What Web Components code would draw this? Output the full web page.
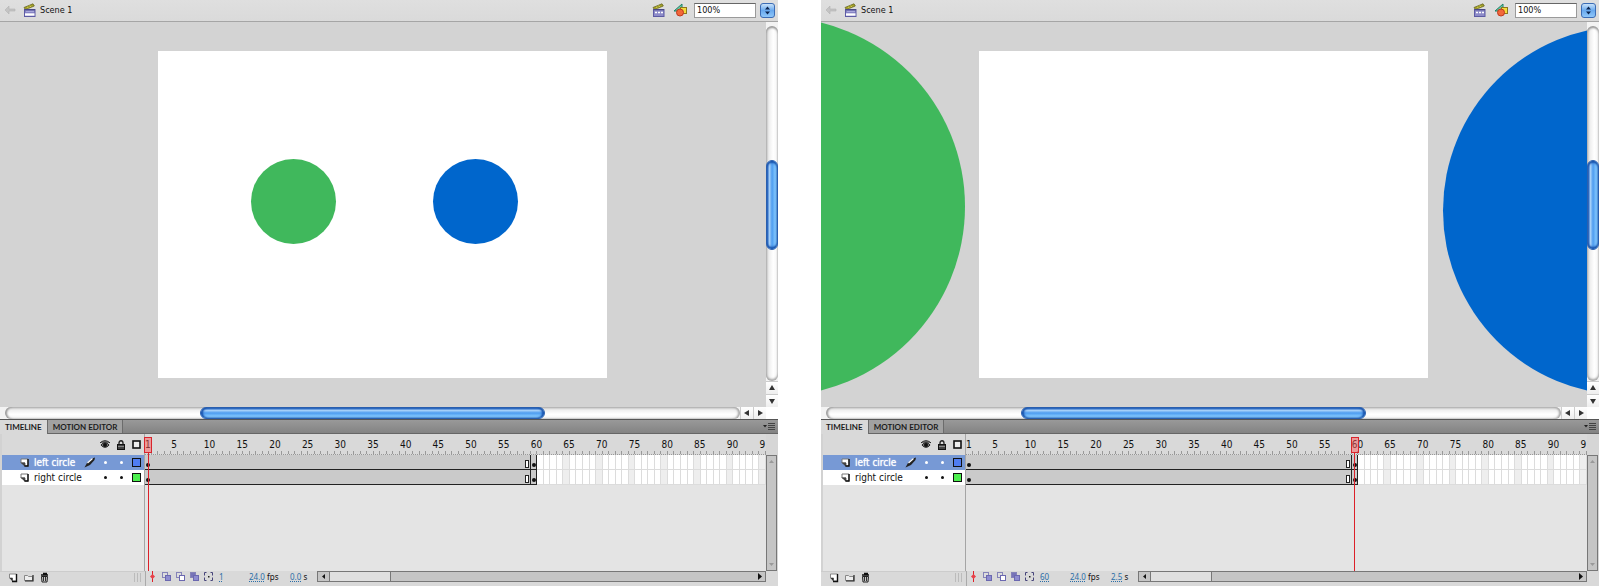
<!DOCTYPE html>
<html lang="en">
<head>
<meta charset="utf-8">
<title>Scene 1</title>
<style>
html,body{margin:0;height:100%;background:#fff}
body{font:10px/12px "DejaVu Sans Condensed","DejaVu Sans",sans-serif;color:#111}
main{display:grid;grid-template-columns:1fr 1fr;gap:43px;height:100vh;min-height:400px}
</style>
</head>
<body>
<main>
  <anim-document frame="1" seconds="0.0" label="Start frame">
    <circle-shape cx="136" cy="151" r="43" fill="#40b85c"></circle-shape>
    <circle-shape cx="318" cy="151" r="43" fill="#0066cc"></circle-shape>
  </anim-document>
  <anim-document frame="60" seconds="2.5" label="End frame">
    <circle-shape cx="-203" cy="156" r="190" fill="#40b85c"></circle-shape>
    <circle-shape cx="649" cy="160" r="185" fill="#0066cc"></circle-shape>
  </anim-document>
</main>
<script>
const reset = `:host,*{box-sizing:border-box}button,input{margin:0;padding:0;border:0;background:none;font:inherit;color:inherit;border-radius:0;display:block}svg{display:block}`;
const define = (name, render) => customElements.define(name, class extends HTMLElement {
  connectedCallback() {
    if (this.shadowRoot) return;
    const root = this.attachShadow({mode: 'open'});
    const t = document.createElement('template');
    t.innerHTML = render(this);
    root.append(t.content.cloneNode(true));
  }
});

const clap = (open) => `<svg width="13" height="14" viewBox="0 0 13 14" aria-hidden="true">
<path d="M1 4.500 10 .8l1.300 2.200L2.500 6.600Z" fill="#a6a22a" stroke="#66661f" stroke-width=".8"/>
<path d="m4 3.800 1.500 1.400M6.500 2.600 8 4.100" stroke="#e0dc60" stroke-width=".8"/>
<rect x="1.500" y="6.500" width="10.500" height="7" fill="${open ? '#8583c4' : '#8d8bc8'}" stroke="#5d5ba4"/>
<path d="M1.500 6.700h10.500" stroke="#494782" stroke-width="1.200"/>
${open ? '<path d="M2 11.500h9.500" stroke="#fff" stroke-width="2.400"/><path d="M3 8.500h8" stroke="#a9a8dc"/>' : '<path d="M3 9.500h8" stroke="#fff" stroke-width="1.500" stroke-dasharray="2 1"/>'}</svg>`;

define('scene-bar', () => `<style>${reset}
:host{display:flex;align-items:center;height:22px;padding:0 3px 1px 4px;border-bottom:1px solid #a5a5a5;background:linear-gradient(#dfdfdf,#dadada);font-size:9px}
.back{margin-right:7px}.name{margin-left:4px;flex:1}
.shapes{margin:0 7px 0 8px}
input{width:62px;height:15px;margin-right:4px;padding:0 2px;background:#fff;border:1px solid #9a9a9a;border-top-color:#666;font-size:9px}
.step{width:15px;height:15px;border-radius:3px;border:1px solid #3b6cb5;background:linear-gradient(#c9e2fa,#69a9ee 50%,#8fc7fa)}
.step svg{margin:auto}
</style>
<button class="back" aria-label="Back"><svg width="12" height="12" viewBox="0 0 12 12"><path d="M1 6 5 2v3h6v2H5v3Z" fill="#c4c4c4" stroke="#b4b4b4" stroke-width=".6"/></svg></button>
${clap(true)}<span class="name">Scene 1</span>
<button aria-label="Edit scene">${clap(false)}</button>
<button class="shapes" aria-label="Edit symbols"><svg width="14" height="14" viewBox="0 0 14 14"><path d="M1 8 9 1v7Z" fill="#6cc9a4" stroke="#1e8068"/><rect x="7.500" y="4.500" width="6" height="6" fill="#f3dd3c" stroke="#8c7820"/><circle cx="7" cy="9.500" r="3.500" fill="#f2683a" stroke="#c0381f"/></svg></button>
<input type="text" value="100%" aria-label="Zoom"><button class="step" aria-label="Zoom presets"><svg width="7" height="9" viewBox="0 0 7 9"><path d="M3.500 .5 6 3.500H1ZM3.500 8.500 1 5.500h5Z" fill="#0b2450"/></svg></button>`);

define('aqua-scroll', (el) => {
  const v = el.hasAttribute('vertical');
  const arrow = (d, l) => `<button aria-label="${l}"><svg width="8" height="8" viewBox="0 0 8 8"><path d="${d}" fill="#333"/></svg></button>`;
  return `<style>${reset}
:host{display:flex;flex-direction:${v ? 'column' : 'row'};${v ? 'width' : 'height'}:12px;background:#f3f3f3;overflow:hidden}
.track{flex:1;display:flex;flex-direction:inherit;border-radius:6px;margin:${v ? '4px 0 0' : '0 0 0 5px'};
 background:linear-gradient(to ${v ? 'right' : 'bottom'},#c4c4c4,#eee 25%,#fff 60%,#f4f4f4);box-shadow:inset ${v ? '0 2px 2px #999,inset 0 -2px 2px #aaa' : '2px 0 2px #999,inset -2px 0 2px #aaa'}}
.a{flex:${el.getAttribute('before')}}.b{flex:${el.getAttribute('after')}}
.thumb{flex:${el.getAttribute('size')};border-radius:6px;border:1px solid #2a5fae;
 background:linear-gradient(to ${v ? 'right' : 'bottom'},#2c6cc8,#a4cff8 25%,#4d9cf0 50%,#74bcfb 75%,#95d6ff);box-shadow:inset ${v ? '0 2px 2px #1550ab,inset 0 -2px 2px #1550ab' : '2px 0 2px #1550ab,inset -2px 0 2px #1550ab'}}
button{width:${v ? 12 : 13}px;height:${v ? 13 : 12}px;display:grid;place-items:center;background:linear-gradient(#fff,#eee);border:0 solid #ccc;border-${v ? 'top' : 'left'}-width:1px}
</style><div class="track"><div class="a"></div><div class="thumb"></div><div class="b"></div></div>
${v ? arrow('M4 1 7 6H1Z', 'Scroll up') + arrow('M4 7 1 2h6Z', 'Scroll down') : arrow('M1 4 6 1v6Z', 'Scroll left') + arrow('M7 4 2 1v6Z', 'Scroll right')}`;
});

define('circle-shape', (el) => {
  const n = (k) => Number(el.getAttribute(k)), r = n('r');
  return `<style>:host{position:absolute;left:${n('cx') - r}px;top:${n('cy') - r}px;width:${2 * r - 1}px;height:${2 * r - 1}px;border-radius:50%;background:${el.getAttribute('fill')}}</style>`;
});

define('stage-view', () => `<style>
:host{display:flex;align-items:center;justify-content:center;padding-right:1px;background:#d3d3d3;overflow:hidden;min-width:0;min-height:0}
.artboard{position:relative;width:449px;height:327px;flex:none;background:#fff}
</style><div class="artboard"><slot></slot></div>`);

define('panel-tabs', () => `<style>${reset}
:host{display:flex;height:15px;border-top:1px solid #555;background:linear-gradient(#999,#838383);border-bottom:1px solid #666;font:700 8px/14px Lato,"Noto Sans",sans-serif}
button{padding:0 5px;background:#a1a1a1;border-right:1px solid #6c6c6c;color:#1c1c1c;white-space:nowrap}
.on{background:#d9d9d9;height:14px}
.menu{margin-left:auto;background:none;border:0;padding:0 3px 0 0}
</style><div role="tablist" style="display:contents"><button role="tab" aria-selected="true" class="on">TIMELINE</button><button role="tab" aria-selected="false">MOTION EDITOR</button></div>
<button class="menu" aria-label="Panel menu"><svg width="12" height="9" viewBox="0 0 12 9"><path d="M0 3h4L2 5.500Z" fill="#222"/><path d="M5 1.500h7M5 3.500h7M5 5.500h7M5 7.500h7" stroke="#444"/></svg></button>`);

define('layer-row', (el) => `<style>${reset}
:host{display:grid;grid-template-columns:32px 46px 1fr 16px 16px 12px;align-items:center;height:15px;background:#fff;color:#111;padding-right:3px}
:host([active]){background:#7799d5;color:#fff;text-shadow:0 0 1px #fff}
.page{justify-self:end;margin-right:5px}.name{white-space:nowrap}
.dot{justify-self:center;width:3px;height:3px;border-radius:50%;background:currentColor}
.box{width:9px;height:9px;border:1px solid #111;background:${el.getAttribute('color')};justify-self:end}
.pen{margin-left:4px}
</style>
<svg class="page" width="9" height="9" viewBox="0 0 9 9"><path d="M1 1h7v7H5V5H1Z" fill="#fff" stroke="#777"/><path d="M.5 4.500 5 8.800V4.500Z" fill="#444"/><path d="M8 1v7H4.500" fill="none" stroke="#111" stroke-width="1.400"/></svg>
<span class="name"><slot></slot></span>
<span class="pen">${el.hasAttribute('active') ? '<svg width="12" height="11" viewBox="0 0 12 11"><path d="M.5 10.500 3 6 8 1.500 11 .5 10.500 3 6 8Z" fill="#222"/><path d="M3.500 6 8.500 1.500" stroke="#fff" stroke-width="1.200"/></svg>' : ''}</span>
<span class="dot"></span><span class="dot"></span><button class="box" aria-label="Show as outlines"></button>`);

const LAST = 95;
define('frame-ruler', () => {
  let labels = '', ticks = '';
  for (let i = 1; i <= LAST; i++) {
    ticks += `<i style="grid-column:${i}"></i>`;
    if (i === 1 || i % 5 === 0) labels += `<span style="grid-column:${i}">${i === LAST ? '9' : i}</span>`;
  }
  return `<style>:host{display:grid;grid-template-columns:repeat(${LAST},minmax(0,1fr));grid-template-rows:17px 4px;height:21px;background:#d9d9d9;border-bottom:1px dotted #999;box-sizing:border-box;font-size:10px;line-height:21px}
span{grid-row:1;white-space:nowrap}i{grid-row:2;border-right:1px solid #999;height:3px}</style>${labels}${ticks}`;
});

define('frame-row', () => {
  let cells = '';
  for (let i = 61; i <= LAST; i++) cells += `<i class="${i % 5 ? '' : 'five'}"></i>`;
  return `<style>*{box-sizing:border-box}
:host{display:grid;grid-template-columns:repeat(${LAST},minmax(0,1fr));height:15px}
.tween,.key{background:#cacaca;border-bottom:1px solid #222;border-right:1px solid #222;display:flex;align-items:flex-end}
.tween{grid-column:1/60;justify-content:space-between;padding:0 1px 1px 1px}
.key{padding:0 0 2px 1px}
.dot{width:4px;height:4px;border-radius:50%;background:#111}.tween .dot{margin-bottom:1px}
.end{width:4px;height:8px;border:1px solid #222;background:#fff}
i{background:#fff;border-right:1px solid #dcdcdc;border-bottom:1px solid #dcdcdc}.five{background:#eee}
</style><div class="tween"><span class="dot"></span><span class="end"></span></div><div class="key"><span class="dot"></span></div>${cells}`;
});

define('play-head', (el) => `<style>*{box-sizing:border-box}
:host{position:absolute;inset:0;z-index:1;display:grid;grid-template-columns:repeat(${LAST},minmax(0,1fr));pointer-events:none}
div{grid-column:${el.getAttribute('frame')};display:flex;flex-direction:column;align-items:center;padding-top:3px}
b{flex:none;width:8px;height:16px;border:1px solid #d8242c;background:rgba(255,90,90,.5)}
i{flex:1;border-left:1px solid #dc2029}
</style><div><b></b><i></i></div>`);

define('panel-scroll', (el) => {
  const v = el.hasAttribute('vertical');
  const a = (d, l) => `<button aria-label="${l}"><svg width="7" height="7" viewBox="0 0 7 7"><path d="${d}" fill="${v ? '#999' : '#111'}"/></svg></button>`;
  return `<style>${reset}:host{display:flex;flex-direction:${v ? 'column' : 'row'};${v ? 'width:11px' : 'height:11px'};border:1px solid #777;background:#c5c5c5}
button{${v ? 'height' : 'width'}:11px;display:grid;place-items:center}
.thumb{width:62px;background:#dfdfdf;border:0 solid #777;border-width:0 1px}.gap{flex:1}</style>
${v ? a('M3.500 2 6 5H1Z', 'Scroll up') : a('M2 3.500 5 1v5Z', 'Scroll left') + '<div class="thumb"></div>'}<div class="gap"></div>${v ? a('M3.500 5 1 2h5Z', 'Scroll down') : a('M6 3.500 2 0v7Z', 'Scroll right')}`;
});

const onion = (a, b) => `<svg width="9" height="9" viewBox="0 0 9 9"><rect x=".5" y=".5" width="5" height="5" fill="${a}" stroke="#8583b8"/><rect x="3.500" y="3.500" width="5" height="5" fill="${b}" stroke="#6b68b0"/></svg>`;
define('timeline-status', (el) => `<style>${reset}
:host{display:grid;grid-template-columns:145px minmax(0,1fr) 12px;height:15px;background:#d9d9d9;font:8px/11px "Noto Sans",sans-serif}
.left{display:flex;align-items:flex-start;gap:6px;padding:0 4px 0 8px;border-top:1px solid #ccc}.grip{margin-left:auto}
.right{display:flex;align-items:flex-start;border-left:1px solid #aaa}
.tools{display:flex;align-items:center;gap:5px;padding-left:4px;width:73px}
.onion{margin-left:2px}
a{color:#2a6ea8;text-decoration:underline dotted;text-underline-offset:1px}
.v{white-space:nowrap}.f{width:30px}.r{width:41px}.s{width:27px}
panel-scroll{flex:1}
</style>
<div class="left">
<button aria-label="New layer"><svg width="10" height="11" viewBox="0 0 10 11"><path d="M1.500 2h7v7h-4V6h-3Z" fill="#fff" stroke="#888"/><path d="M1.500 6 4.500 9.500V6Z" fill="#333"/><path d="M8.500 2v7.500H4" fill="none" stroke="#111" stroke-width="1.400"/></svg></button>
<button aria-label="New folder"><svg width="10" height="11" viewBox="0 0 10 11"><path d="M.5 3.500h3l1 1h4v4h-8Z" fill="#eee" stroke="#888"/><path d="M9 3v6H1" fill="none" stroke="#222" stroke-width="1.200"/></svg></button>
<button aria-label="Delete"><svg width="9" height="11" viewBox="0 0 9 11"><path d="M1 3h7M3 1.500h4" stroke="#111" stroke-width="1.300"/><path d="M1.500 4.500h6l-.5 5.500H2Z" fill="#ccc" stroke="#222"/><path d="M3.500 5v4M5.500 5v4" stroke="#333"/></svg></button>
<svg class="grip" width="7" height="11" viewBox="0 0 7 11"><path d="M.5 1v9M3.500 1v9M6.500 1v9" stroke="#bbb"/></svg></div>
<div class="right"><div class="tools">
<button aria-label="Center frame"><svg width="5" height="11" viewBox="0 0 5 11"><path d="M2.500 0v11" stroke="#e02028"/><path d="M2.500 3 5 5.500 2.500 8 0 5.500Z" fill="#e84048"/></svg></button>
<button class="onion" aria-label="Onion skin">${onion('#ddd', '#8e8cd0')}</button><button aria-label="Onion skin outlines">${onion('#ddd', '#fff')}</button><button aria-label="Edit multiple frames">${onion('#7774b8', '#8e8cd0')}</button>
<button aria-label="Modify markers"><svg width="9" height="9" viewBox="0 0 9 9"><path d="M2.500 .5H.5v3M.5 5.500v3h2M6.500 .5h2v3M8.500 5.500v3h-2" fill="none" stroke="#46447a"/><rect x="4" y="4" width="1.500" height="1.500" fill="#222"/></svg></button></div>
<span class="v f"><a href="#frame">${el.getAttribute('frame')}</a></span>
<span class="v r"><a href="#rate">24.0</a> fps</span>
<span class="v s"><a href="#time">${el.getAttribute('seconds')}</a> s</span>
<panel-scroll></panel-scroll></div>`);

define('timeline-panel', (el) => `<style>${reset}
:host{display:block;background:#d6d6d6}
.main{display:grid;grid-template-columns:145px minmax(0,1fr) 12px;height:137px}
.layers{background:#e4e4e4;border-left:2px solid #d2d2d2;border-right:1px solid #a5a5a5}
.head{display:grid;grid-template-columns:1fr 16px 16px 12px;align-items:center;height:21px;background:#d9d9d9;padding-right:3px}
.head button{justify-self:center}.head button:last-child{justify-self:end}
.frames{position:relative;background:#e4e4e4}
panel-scroll{margin-top:21px}
</style><panel-tabs></panel-tabs>
<div class="main"><div class="layers">
<div class="head"><span></span>
<button aria-label="Show or hide all layers"><svg width="10" height="9" viewBox="0 0 10 9"><path d="M0 3C3 0 7 0 10 3M1 5c2-3 6-3 8 0-2 3-6 3-8 0Z" fill="#777" stroke="#222"/><circle cx="5" cy="5" r="2" fill="#111"/></svg></button>
<button aria-label="Lock or unlock all layers"><svg width="8" height="10" viewBox="0 0 8 10"><path d="M2 5V3c0-3 4-3 4 0v2" fill="none" stroke="#222" stroke-width="1.300"/><rect x=".5" y="4.500" width="7" height="5" fill="#444" stroke="#111"/><path d="M1 6.500h6" stroke="#888"/></svg></button>
<button aria-label="Show all layers as outlines"><svg width="9" height="9" viewBox="0 0 9 9"><rect x="1" y="1" width="7" height="7" fill="#eee" stroke="#111" stroke-width="1.600"/></svg></button></div>
<layer-row active color="#4f7df2">left circle</layer-row>
<layer-row color="#4df04f">right circle</layer-row></div>
<div class="frames"><frame-ruler></frame-ruler><frame-row></frame-row><frame-row></frame-row><play-head frame="${el.getAttribute('frame')}"></play-head></div>
<panel-scroll vertical></panel-scroll></div>
<timeline-status frame="${el.getAttribute('frame')}" seconds="${el.getAttribute('seconds')}"></timeline-status>`);

define('anim-document', (el) => `<style>
:host{display:grid;grid-template-rows:auto minmax(0,1fr) auto auto;min-width:0;min-height:0}
.view{display:grid;grid-template-columns:minmax(0,1fr) 12px;min-height:0}
.foot{display:grid;grid-template-columns:minmax(0,1fr) 12px}
</style><scene-bar></scene-bar>
<div class="view"><stage-view><slot></slot></stage-view><aqua-scroll vertical before="135" size="88" after="132"></aqua-scroll></div>
<div class="foot"><aqua-scroll before="196" size="343" after="196"></aqua-scroll></div>
<timeline-panel frame="${el.getAttribute('frame')}" seconds="${el.getAttribute('seconds')}"></timeline-panel>`);
</script>
</body>
</html>
